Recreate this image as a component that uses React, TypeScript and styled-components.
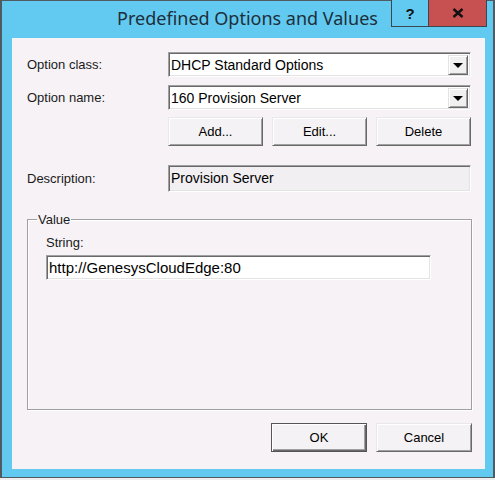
import styled, { createGlobalStyle } from "styled-components";

const GlobalStyle = createGlobalStyle`
  html, body {
    margin: 0;
    padding: 0;
    background: #eeeeee;
  }
  * {
    box-sizing: border-box;
  }
`;

function App() {
  return (
    <>
      <GlobalStyle />
      <Window>
        <TitleBar>
          <span />
          <Title>Predefined Options and Values</Title>
          <CaptionButtons>
            <HelpButton>?</HelpButton>
            <CloseButton>
              <svg width="12" height="10" viewBox="0 0 12 10">
                <path d="M1.5 1 L10.5 9 M10.5 1 L1.5 9" stroke="#111" strokeWidth="2.4" />
              </svg>
            </CloseButton>
          </CaptionButtons>
        </TitleBar>

        <Client>
          <FormGrid>
            <Label>Option class:</Label>
            <Combo>
              <ComboText>DHCP Standard Options</ComboText>
              <DropButton>
                <Arrow />
              </DropButton>
            </Combo>

            <Label>Option name:</Label>
            <Combo>
              <ComboText>160 Provision Server</ComboText>
              <DropButton>
                <Arrow />
              </DropButton>
            </Combo>

            <span />
            <ButtonRow>
              <Button>Add...</Button>
              <Button>Edit...</Button>
              <Button>Delete</Button>
            </ButtonRow>

            <Label $top={11}>Description:</Label>
            <ReadOnlyBox $top={11}>Provision Server</ReadOnlyBox>
          </FormGrid>

          <GroupBox>
            <Legend>Value</Legend>
            <GroupContent>
              <Label>String:</Label>
              <TextInput defaultValue="http://GenesysCloudEdge:80" />
            </GroupContent>
          </GroupBox>

          <Footer>
            <Button $default>OK</Button>
            <Button>Cancel</Button>
          </Footer>
        </Client>
      </Window>
    </>
  );
}

const Window = styled.div`
  width: 495px;
  height: 478px;
  background: #62c9f0;
  border: 1px solid #4f5a61;
  border-left-width: 2px;
  border-right-width: 2px;
  display: flex;
  flex-direction: column;
  padding: 0 8px 8px 10px;
`;

const TitleBar = styled.div`
  height: 37px;
  display: grid;
  grid-template-columns: 1fr auto 1fr;
  align-items: start;
  margin: 0 -8px 0 -10px;
`;

const Title = styled.div`
  font-family: "Noto Sans", "Open Sans", sans-serif;
  font-size: 18px;
  color: #1d2f3a;
  padding-top: 5px;
  white-space: nowrap;
`;

const CaptionButtons = styled.div`
  display: flex;
  justify-content: flex-end;
  margin-top: -1px;
  padding-right: 6px;
`;

const CaptionButton = styled.div`
  height: 27px;
  border: 1px solid #3a4650;
  border-top: none;
  display: flex;
  align-items: center;
  justify-content: center;
  font-family: "Liberation Sans", Arial, sans-serif;
  font-weight: bold;
  font-size: 15px;
  color: #111;
`;

const HelpButton = styled(CaptionButton)`
  width: 37px;
  background: #62c9f0;
  border-right: none;
`;

const CloseButton = styled(CaptionButton)`
  width: 59px;
  background: #c75050;
`;

const Client = styled.div`
  flex: 1;
  background: #f6f2f6;
  padding: 14px 13px 0 15px;
  display: flex;
  flex-direction: column;
  font-family: "Liberation Sans", Arial, sans-serif;
  font-size: 13px;
  color: #000;
`;

const FormGrid = styled.div`
  display: grid;
  grid-template-columns: 141px 303px;
  row-gap: 8px;
  align-items: center;
`;

const Label = styled.div<{ $top?: number }>`
  margin-top: ${(p) => p.$top ?? 0}px;
  color: #1a1a1a;
  white-space: nowrap;
`;

const Combo = styled.div`
  height: 25px;
  background: #fff;
  border: 1px solid;
  border-color: #a0a0a0 #ffffff #ffffff #a0a0a0;
  box-shadow: inset 1px 1px 0 #696969, inset -1px -1px 0 #e3e3e3;
  display: flex;
  align-items: center;
  padding: 1px 2px 1px 2px;
  font-size: 14px;
`;

const ComboText = styled.div`
  flex: 1;
`;

const DropButton = styled.div`
  width: 20px;
  height: 20px;
  background: #f0f0f0;
  border: 1px solid;
  border-color: #e3e3e3 #696969 #696969 #e3e3e3;
  box-shadow: inset 1px 1px 0 #fff, inset -1px -1px 0 #a0a0a0;
  display: flex;
  align-items: center;
  justify-content: center;
`;

const Arrow = styled.div`
  width: 0;
  height: 0;
  border-left: 5px solid transparent;
  border-right: 5px solid transparent;
  border-top: 5px solid #000;
  margin-top: 1px;
`;

const ButtonRow = styled.div`
  display: flex;
  gap: 9px;
  margin-top: -1px;
`;

const Button = styled.button<{ $default?: boolean }>`
  width: 96px;
  height: 29px;
  padding: 0;
  font-family: "Liberation Sans", Arial, sans-serif;
  font-size: 13px;
  color: #000;
  background: #f4f2f4;
  border: 1px solid;
  border-color: ${(p) =>
    p.$default ? "#555555" : "#e8e8e8 #696969 #696969 #e8e8e8"};
  box-shadow: ${(p) =>
    p.$default
      ? "inset 1px 1px 0 #fff, inset -1px -1px 0 #696969, inset -2px -2px 0 #a0a0a0"
      : "inset 1px 1px 0 #fff, inset -1px -1px 0 #a0a0a0"};
`;

const ReadOnlyBox = styled.div<{ $top?: number }>`
  margin-top: ${(p) => p.$top ?? 0}px;
  height: 27px;
  background: #f2eff2;
  border: 1px solid;
  border-color: #a0a0a0 #ffffff #ffffff #a0a0a0;
  box-shadow: inset 1px 1px 0 #696969, inset -1px -1px 0 #e3e3e3;
  padding: 4px 2px;
  width: 303px;
  font-size: 14px;
`;

const GroupBox = styled.fieldset`
  margin: 20px 0 0 0;
  padding: 0;
  width: 445px;
  height: 198px;
  border: 1px solid #a0a0a0;
  box-shadow: inset 1px 1px 0 #fff, 1px 1px 0 #fff;
  min-width: 0;
`;

const Legend = styled.legend`
  margin-left: 9px;
  padding: 0 1px;
  color: #1a1a1a;
`;

const GroupContent = styled.div`
  padding: 8px 0 0 18px;
  display: flex;
  flex-direction: column;
  gap: 5px;
`;

const TextInput = styled.input`
  width: 385px;
  height: 25px;
  background: #fff;
  border: 1px solid;
  border-color: #a0a0a0 #ffffff #ffffff #a0a0a0;
  box-shadow: inset 1px 1px 0 #696969, inset -1px -1px 0 #e3e3e3;
  padding: 1px 2px;
  font-family: "Liberation Sans", Arial, sans-serif;
  font-size: 15px;
  color: #000;
  outline: none;
`;

const Footer = styled.div`
  display: flex;
  justify-content: flex-end;
  gap: 9px;
  margin-top: 13px;
`;

export default App;
